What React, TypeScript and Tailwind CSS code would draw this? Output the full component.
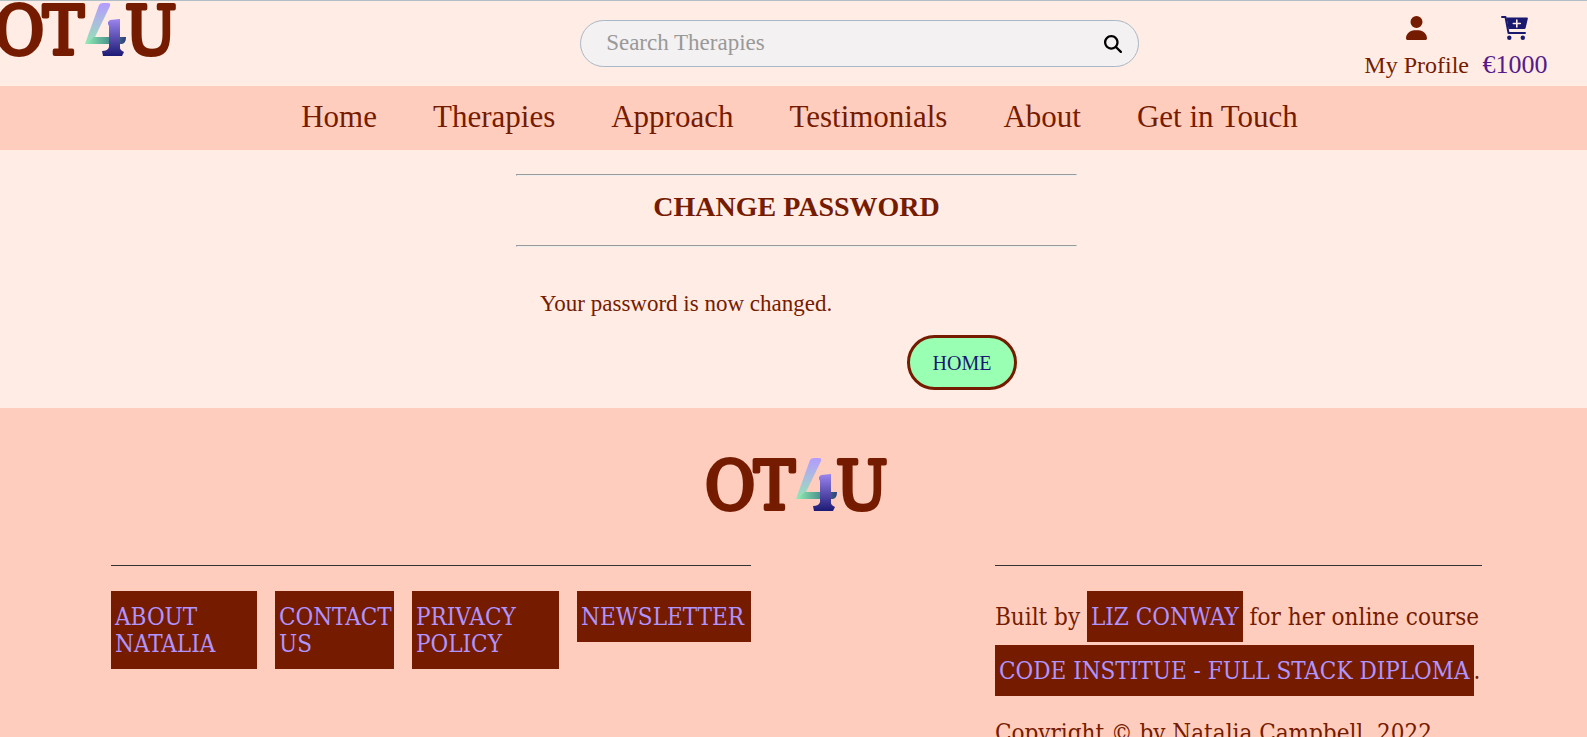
import { useId } from 'react';
import { FaMagnifyingGlass, FaUser } from 'react-icons/fa6';

const NAV = ['Home', 'Therapies', 'Approach', 'Testimonials', 'About', 'Get in Touch'];

const FOOTER_LINKS = [
  { label: 'About Natalia', width: 'w-[146px]' },
  { label: 'Contact Us', width: 'w-[119px]' },
  { label: 'Privacy Policy', width: 'w-[147px]' },
  { label: 'Newsletter', width: 'w-[174px]' },
];

function Logo({ className = '' }: { className?: string }) {
  const id = useId();
  return (
    <svg
      viewBox="0 0 182 56"
      role="img"
      aria-label="OT4U"
      className={`h-14 w-[182px] shrink-0 overflow-visible ${className}`}
    >
      <defs>
        <linearGradient id={`${id}a`} x1="0" y1="0" x2="0" y2="1">
          <stop offset="0" stopColor="#b39cff" />
          <stop offset="0.5" stopColor="#a9bfdc" />
          <stop offset="1" stopColor="#8fe6b4" />
        </linearGradient>
        <linearGradient id={`${id}b`} x1="0" y1="0" x2="1" y2="0">
          <stop offset="0" stopColor="#93efb3" />
          <stop offset="0.55" stopColor="#4f9a90" />
          <stop offset="1" stopColor="#2d3f7c" />
        </linearGradient>
        <linearGradient id={`${id}c`} x1="0" y1="0" x2="0" y2="1">
          <stop offset="0" stopColor="#9b85ee" />
          <stop offset="1" stopColor="#1c1a74" />
        </linearGradient>
      </defs>
      <g
        className="fill-[#751b00] stroke-[#751b00] font-['DejaVu_Serif_Condensed','DejaVu_Serif',serif] text-[68px]"
        strokeWidth="4"
        strokeLinejoin="round"
      >
        <text x="-1" y="52">O</text>
        <text x="48" y="52">T</text>
        <text x="130" y="52">U</text>
      </g>
      <path d="M104 3 Q105 1 108 1 H113 Q116 1 115 4 L100 35 L90 42 Z" fill={`url(#${id}a)`} />
      <path d="M90 42 L99 35 H131 Q131 41 127 42 Z" fill={`url(#${id}b)`} />
      <path
        d="M113 20 L115 18 L125 17 V46 Q125 48 129 50 L127 54 H108 L107 49 Q113 49 114 45 V24 L113 22 Z"
        fill={`url(#${id}c)`}
      />
    </svg>
  );
}

function CartIcon() {
  return (
    <svg viewBox="0 0 27 24" aria-hidden="true" className="h-6 w-[27px] text-[#191970]">
      <path d="M1 1 H4.500 L7.500 17 H24" fill="none" stroke="currentColor" strokeWidth="2" strokeLinecap="round" strokeLinejoin="round" />
      <path d="M5.500 1.500 H26 Q27 1.500 26.800 2.700 L24.600 12 Q24.300 13 23.300 13 H7.500 Z" fill="currentColor" />
      <path d="M15.800 4 V11 M12.300 7.500 H19.300" stroke="#ffece4" strokeWidth="1.600" strokeLinecap="round" />
      <circle cx="8.300" cy="21.800" r="2.200" fill="currentColor" />
      <circle cx="21.800" cy="21.800" r="2.200" fill="currentColor" />
    </svg>
  );
}

function InsetRule() {
  return (
    <hr className="h-0.5 border border-t-[#9a9a9a] border-r-[#eeeeee] border-b-[#eeeeee] border-l-[#9a9a9a]" />
  );
}

const tag = 'bg-[#751b00] px-1 pt-[13px] pb-[11px] leading-[27px] text-[#b094ff] uppercase';

export default function App() {
  return (
    <div className="min-h-screen overflow-x-hidden bg-[#ffece4] font-['Liberation_Serif',serif] text-[#751b00]">
      <header className="flex h-[86px] justify-between border-t border-[#b0bec5]">
        <a href="#" className="-ml-[5px] pt-px">
          <Logo />
        </a>
        <form className="mt-[19px] ml-[178px] flex h-[47px] w-[559px] items-center self-start rounded-3xl border border-[#a9b8c6] bg-[#f4f1f2] pr-4 pl-[25px]">
          <input
            type="search"
            aria-label="Search Therapies"
            placeholder="Search Therapies"
            className="min-w-0 flex-1 bg-transparent text-[23px] outline-none placeholder:text-[#999]"
          />
          <button type="button" aria-label="Search" className="text-black">
            <FaMagnifyingGlass className="size-[18px]" />
          </button>
        </form>
        <div className="flex gap-3 pt-[15px] pr-[38px] text-2xl leading-7">
          <a href="#" className="flex flex-col items-center gap-[11px]">
            <FaUser className="h-6 w-[21px]" />
            My Profile
          </a>
          <a href="#" className="flex w-[68px] flex-col items-center gap-[11px] text-[26px] leading-7 text-[#551a8b]">
            <CartIcon />
            €1000
          </a>
        </div>
      </header>

      <nav className="flex h-16 items-center justify-center gap-14 bg-[#ffcdbe] pb-0.5 pl-3 text-[31px] leading-9">
        {NAV.map((item) => (
          <a key={item} href="#">
            {item}
          </a>
        ))}
      </nav>

      <main className="mx-auto flex h-[258px] w-[567px] flex-col pt-6 pl-1.5">
        <InsetRule />
        <h1 className="pt-[13px] pb-5 text-center text-[28px] leading-9 font-bold uppercase">
          Change Password
        </h1>
        <InsetRule />
        <p className="pt-[43px] pl-6 text-[23px] leading-7">Your password is now changed.</p>
        <a
          href="#"
          className="mt-[17px] mr-[60px] flex h-[55px] w-[110px] items-center justify-center self-end rounded-[28px] border-3 border-[#751b00] bg-[#99ffb3] text-xl text-[#191970]"
        >
          HOME
        </a>
      </main>

      <footer className="bg-[#ffcdbe] px-[105px] pt-[49px] pb-10 pl-[111px] font-['DejaVu_Serif_Condensed','DejaVu_Serif',serif] text-2xl">
        <div className="flex justify-center">
          <Logo />
        </div>
        <div className="flex justify-between pt-[52px]">
          <section className="flex w-[640px] items-start gap-[18px] border-t border-[#333] pt-[25px]">
            {FOOTER_LINKS.map(({ label, width }) => (
              <a key={label} href="#" className={`${tag} ${width}`}>
                {label}
              </a>
            ))}
          </section>
          <section className="w-[487px] border-t border-[#333] pt-[25px] leading-[27px] whitespace-nowrap">
            <p>
              Built by <a href="#" className={`${tag} inline-block`}>Liz Conway</a> for her online course
            </p>
            <p className="pt-[3px]">
              <a href="#" className={`${tag} inline-block`}>Code Institue - Full Stack Diploma</a>.
            </p>
            <p className="pt-6">Copyright © by Natalia Campbell, 2022</p>
          </section>
        </div>
      </footer>
    </div>
  );
}
